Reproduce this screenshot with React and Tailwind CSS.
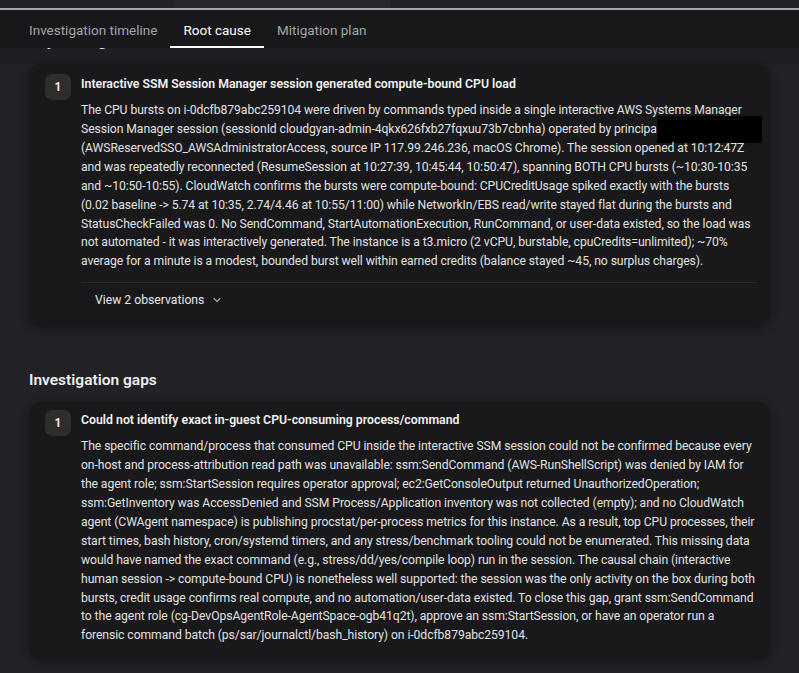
import React from "react";

const card1Lines = [
  "The CPU bursts on i-0dcfb879abc259104 were driven by commands typed inside a single interactive AWS Systems Manager",
  "__REDACT__",
  "(AWSReservedSSO_AWSAdministratorAccess, source IP 117.99.246.236, macOS Chrome). The session opened at 10:12:47Z",
  "and was repeatedly reconnected (ResumeSession at 10:27:39, 10:45:44, 10:50:47), spanning BOTH CPU bursts (~10:30-10:35",
  "and ~10:50-10:55). CloudWatch confirms the bursts were compute-bound: CPUCreditUsage spiked exactly with the bursts",
  "(0.02 baseline -> 5.74 at 10:35, 2.74/4.46 at 10:55/11:00) while NetworkIn/EBS read/write stayed flat during the bursts and",
  "StatusCheckFailed was 0. No SendCommand, StartAutomationExecution, RunCommand, or user-data existed, so the load was",
  "not automated - it was interactively generated. The instance is a t3.micro (2 vCPU, burstable, cpuCredits=unlimited); ~70%",
  "average for a minute is a modest, bounded burst well within earned credits (balance stayed ~45, no surplus charges).",
];

const card2Lines = [
  "The specific command/process that consumed CPU inside the interactive SSM session could not be confirmed because every",
  "on-host and process-attribution read path was unavailable: ssm:SendCommand (AWS-RunShellScript) was denied by IAM for",
  "the agent role; ssm:StartSession requires operator approval; ec2:GetConsoleOutput returned UnauthorizedOperation;",
  "ssm:GetInventory was AccessDenied and SSM Process/Application inventory was not collected (empty); and no CloudWatch",
  "agent (CWAgent namespace) is publishing procstat/per-process metrics for this instance. As a result, top CPU processes, their",
  "start times, bash history, cron/systemd timers, and any stress/benchmark tooling could not be enumerated. This missing data",
  "would have named the exact command (e.g., stress/dd/yes/compile loop) run in the session. The causal chain (interactive",
  "human session -> compute-bound CPU) is nonetheless well supported: the session was the only activity on the box during both",
  "bursts, credit usage confirms real compute, and no automation/user-data existed. To close this gap, grant ssm:SendCommand",
  "to the agent role (cg-DevOpsAgentRole-AgentSpace-ogb41q2t), approve an ssm:StartSession, or have an operator run a",
  "forensic command batch (ps/sar/journalctl/bash_history) on i-0dcfb879abc259104.",
];

function Badge() {
  return (
    <div className="flex h-[26px] w-[26px] shrink-0 items-center justify-center rounded-[7px] bg-[#2f2e2d] text-[12px] font-semibold text-white">
      1
    </div>
  );
}

function Lines({ lines }) {
  return (
    <div className="mt-[8px] text-[12.2px] leading-[18.9px] tracking-[-0.08px] text-[#e0e0e0]">
      {lines.map((l, i) =>
        l === "__REDACT__" ? (
          <div key={i} className="flex items-center whitespace-nowrap">
            <span>
              Session Manager session (sessionId cloudgyan-admin-4qkx626fxb27fqxuu73b7cbnha) operated by principa
            </span>
            <span className="my-[-4px] ml-auto mr-[-3px] h-[27px] w-[105px] shrink-0 bg-black" />
          </div>
        ) : (
          <div key={i} className="whitespace-nowrap">
            {l}
          </div>
        )
      )}
    </div>
  );
}

export default function App() {
  return (
    <div
      className="h-[673px] w-[799px] overflow-hidden bg-[#222226] [font-variant-ligatures:none]"
      style={{ fontFamily: "Roboto, 'Noto Sans', sans-serif" }}
    >
      {/* top strip */}
      <div className="flex h-[8px] bg-[#232327]">
        <div className="ml-[175px] w-[215px] bg-[#28282c]" />
      </div>
      <div className="h-[2px] bg-[#a7a7ab]" />
      {/* tab bar */}
      <div className="flex h-[38px] items-stretch bg-[#18181a] pl-[16px] text-[13.5px]">
        <div className="flex items-center px-[13px] pt-[2px] text-[#a3a3a8]">Investigation timeline</div>
        <div className="flex flex-col px-[13px] text-white">
          <div className="flex flex-1 items-center pt-[4px]">Root cause</div>
          <div className="-mx-[13px] h-[2px] bg-white" />
        </div>
        <div className="flex items-center px-[13px] pt-[2px] text-[#a3a3a8]">Mitigation plan</div>
      </div>
      {/* clipped heading */}
      <div className="h-[16px] overflow-hidden bg-[#1f1f23] pl-[29px]">
        <div className="-mt-[18px] text-[15.5px] font-semibold leading-[22px] text-[#eaeaea]">Key findings</div>
      </div>

      <div className="pl-[29px] pr-[29px]">
        {/* card 1 */}
        <div className="rounded-[12px] bg-[#19191b] pb-[17px] pl-[16px] pr-[13px] pt-[10px] shadow-[0_2px_8px_rgba(0,0,0,0.35)]">
          <div className="flex gap-[10px]">
            <Badge />
            <div className="min-w-0 flex-1">
              <div className="pt-[1px] text-[12.3px] font-semibold leading-[18px] text-[#f3f3f3]">
                Interactive SSM Session Manager session generated compute-bound CPU load
              </div>
              <Lines lines={card1Lines} />
              <div className="mt-[11px] h-px bg-[#2a2a2d]" />
              <div className="mt-[8px] flex items-center gap-[8px] pl-[14px] text-[12.2px] leading-[18px] text-[#e6e6e6]">
                <span>View 2 observations</span>
                <svg width="10" height="10" viewBox="0 0 10 10" fill="none">
                  <path d="M2 3.5L5 6.5L8 3.5" stroke="#a0a0a5" strokeWidth="1.2" strokeLinecap="round" strokeLinejoin="round" />
                </svg>
              </div>
            </div>
          </div>
        </div>

        <div className="mt-[43px] text-[15.5px] font-semibold leading-[22px] text-[#eeeeee]">Investigation gaps</div>

        {/* card 2 */}
        <div className="mt-[11px] rounded-[12px] bg-[#19191b] pb-[14px] pl-[16px] pr-[13px] pt-[8px] shadow-[0_2px_8px_rgba(0,0,0,0.35)]">
          <div className="flex gap-[10px]">
            <Badge />
            <div className="min-w-0 flex-1">
              <div className="pt-[1px] text-[12.3px] font-semibold leading-[18px] text-[#f3f3f3]">
                Could not identify exact in-guest CPU-consuming process/command
              </div>
              <Lines lines={card2Lines} />
            </div>
          </div>
        </div>
      </div>
    </div>
  );
}
